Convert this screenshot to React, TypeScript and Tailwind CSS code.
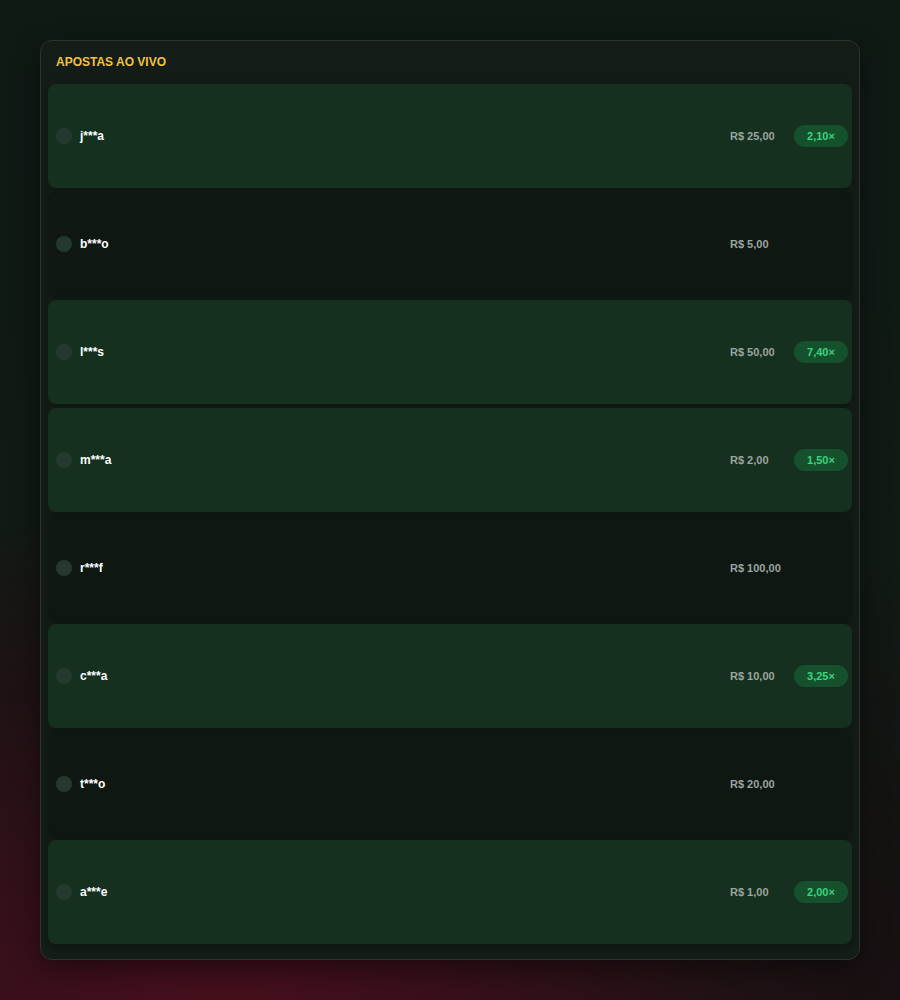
import React from 'react';

type Bet = { user: string; amount: string; mult?: string };

const bets: Bet[] = [
  { user: 'j***a', amount: 'R$ 25,00', mult: '2,10×' },
  { user: 'b***o', amount: 'R$ 5,00' },
  { user: 'l***s', amount: 'R$ 50,00', mult: '7,40×' },
  { user: 'm***a', amount: 'R$ 2,00', mult: '1,50×' },
  { user: 'r***f', amount: 'R$ 100,00' },
  { user: 'c***a', amount: 'R$ 10,00', mult: '3,25×' },
  { user: 't***o', amount: 'R$ 20,00' },
  { user: 'a***e', amount: 'R$ 1,00', mult: '2,00×' },
];

export default function App() {
  return (
    <div
      className="min-h-[1000px] w-full p-10 font-['Liberation_Sans',Arial,sans-serif] bg-[#0e1813] bg-[radial-gradient(ellipse_760px_560px_at_220px_1060px,#4d0f1e_0%,#33101a_40%,#1f1215_70%,transparent_100%),linear-gradient(180deg,#0f1a15_0%,#111a15_55%,#150f10_100%)]"
    >
      <div className="rounded-xl border border-[#2b352e] bg-[#131c17] px-[7px] pb-[15px] shadow-[0_10px_30px_rgba(0,0,0,0.45)]">
        <h2 className="px-2 pt-[13px] pb-[14px] text-xs leading-4 font-bold text-[#f3c23c]">APOSTAS AO VIVO</h2>
        <div className="flex flex-col gap-1">
          {bets.map((b) => (
            <div
              key={b.user}
              className={
                b.mult
                  ? 'flex h-[104px] items-center rounded-lg bg-[#15301f] pl-2 pr-1 shadow-[0_2px_6px_rgba(0,0,0,0.25)]'
                  : 'flex h-[104px] items-center rounded-lg bg-[#0e1712] pl-2 pr-1 shadow-[0_2px_6px_rgba(0,0,0,0.25)]'
              }
            >
              <div className="h-4 w-4 shrink-0 rounded-full bg-[#26392e]" />
              <span className="ml-2 flex-1 text-xs font-bold text-white">{b.user}</span>
              <span className="w-[56px] text-[11px] font-bold text-[#9ba59f]">{b.amount}</span>
              <div className="ml-2 w-[54px]">
                {b.mult && (
                  <span className="flex h-[22px] items-center justify-center rounded-full bg-[#15512d] text-[11px] font-bold text-[#3ad47f]">
                    {b.mult}
                  </span>
                )}
              </div>
            </div>
          ))}
        </div>
      </div>
    </div>
  );
}
